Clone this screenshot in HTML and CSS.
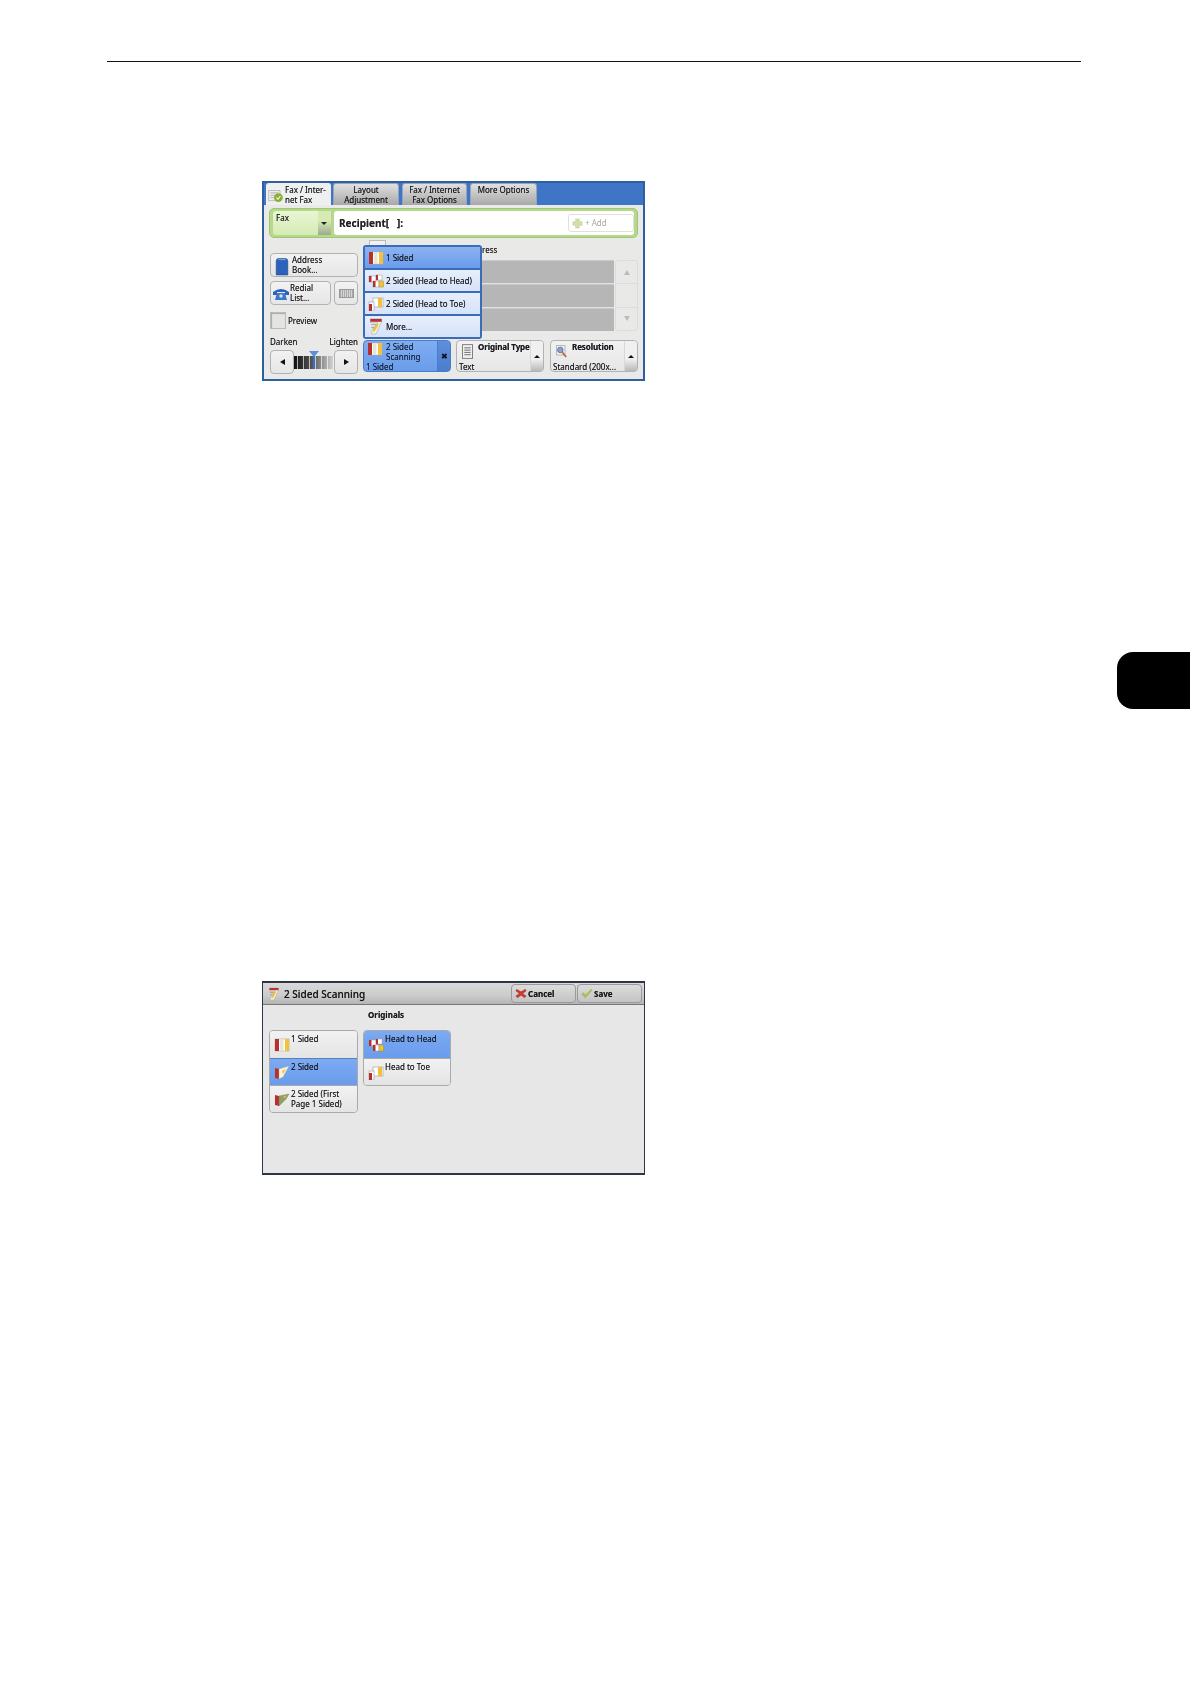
FILE: index.html
```html
<!DOCTYPE html>
<html lang="en">
<head>
<meta charset="utf-8">
<title>2 Sided Scanning</title>
<link rel="stylesheet" href="styles.css">
</head>
<body>
<svg class="sprite" xmlns="http://www.w3.org/2000/svg">
  <symbol id="i-one" viewBox="0 0 16 14">
    <rect x="1" y="1" width="14" height="12" fill="#fff" stroke="#aaa" stroke-width=".6"/>
    <rect x="1" y="1" width="4" height="12" fill="#b8302c"/>
    <rect x="6" y="1" width="3.500" height="12" fill="#e9e4d8"/>
    <rect x="11" y="1" width="4" height="12" fill="#f0c23c"/>
  </symbol>
  <symbol id="i-hh" viewBox="0 0 16 14">
    <rect x="1" y="2" width="7" height="6" fill="#fff" stroke="#999" stroke-width=".5"/>
    <rect x="1" y="2" width="2.500" height="6" fill="#b8302c"/>
    <rect x="8" y="1" width="6" height="5" fill="#fff" stroke="#999" stroke-width=".5"/>
    <rect x="8" y="1" width="2" height="5" fill="#b8302c"/>
    <rect x="5" y="7" width="6" height="6" fill="#fff" stroke="#999" stroke-width=".5"/>
    <rect x="5" y="7" width="2.500" height="6" fill="#b8302c"/>
    <rect x="11" y="7" width="4.500" height="6" fill="#f0c23c" stroke="#a98a2c" stroke-width=".5"/>
  </symbol>
  <symbol id="i-ht" viewBox="0 0 16 14">
    <rect x="5" y="1" width="10" height="9" fill="#fff" stroke="#999" stroke-width=".6"/>
    <rect x="10" y="1" width="4" height="9" fill="#f0c23c"/>
    <rect x="1" y="5" width="5" height="9" fill="#fff" stroke="#999" stroke-width=".6"/>
    <rect x="1" y="7" width="3" height="7" fill="#b8302c"/>
  </symbol>
  <symbol id="i-more" viewBox="0 0 16 18">
    <path d="M2 1h12v3L8 17H3l1-4 6-8H2z" fill="#f4efe2" stroke="#9a9a9a" stroke-width=".5"/>
    <path d="M2 1h12v3H2z" fill="#b8302c"/>
    <path d="M4 12l5-6 2 1-5 8z" fill="#f0c23c"/>
    <path d="M3 7h5M3 10h3" stroke="#777" stroke-width=".6"/>
  </symbol>
  <symbol id="i-fold" viewBox="0 0 16 14">
    <path d="M1 2l4 1v10l-4-1z" fill="#b8302c"/>
    <path d="M5 3l10-3-6 11-4 2z" fill="#fbf3dc" stroke="#aaa" stroke-width=".4"/>
    <path d="M8 5l4-2-3 5z" fill="#f0c23c"/>
  </symbol>
  <symbol id="i-first" viewBox="0 0 16 14">
    <path d="M1 2l4 1v10l-4-1z" fill="#b8302c"/>
    <path d="M5 3l10-2-3 5-7 7z" fill="#8fa060" stroke="#777" stroke-width=".4"/>
    <path d="M9 4l4-2-2 3z" fill="#f0c23c"/>
  </symbol>
  <symbol id="i-doc" viewBox="0 0 12 16">
    <rect x=".5" y=".5" width="11" height="15" fill="#f0f0f0" stroke="#777"/>
    <path d="M2.500 4h7M2.500 6.500h7M2.500 9h7M2.500 11.500h7" stroke="#666"/>
  </symbol>
  <symbol id="i-res" viewBox="0 0 14 16">
    <rect x=".5" y=".5" width="11" height="12" fill="#eee" stroke="#aaa"/>
    <circle cx="5.500" cy="6" r="3.500" fill="#8f9fe0" stroke="#566"/>
    <path d="M8 9l5 6" stroke="#b0642c" stroke-width="2"/>
  </symbol>
  <symbol id="i-book" viewBox="0 0 13 17">
    <path d="M1 3q0-2.500 2-2.500h7q2 0 2 2.500v13H1z" fill="#2c62b8" stroke="#1d4488" stroke-width=".5"/>
    <path d="M3 1.500h7" stroke="#7fa4e0"/>
  </symbol>
  <symbol id="i-phone" viewBox="0 0 16 13">
    <path d="M0 5Q8-1 16 5v3h-4V5H4v3H0z" fill="#2c62b8"/>
    <path d="M2 13l2-7h8l2 7z" fill="#3a78c8"/>
    <circle cx="8" cy="9" r="1.800" fill="#cfe0f8"/>
  </symbol>
  <symbol id="i-check" viewBox="0 0 20 16">
    <rect x="1" y="1" width="14" height="13" fill="#ececec" stroke="#999" stroke-width=".7"/>
    <path d="M3 4h10M3 7h6M3 10h5" stroke="#aaa"/>
    <circle cx="13" cy="10" r="5.500" fill="#8cae32"/>
    <path d="M10.500 10l2 2 3-4" fill="none" stroke="#fff" stroke-width="1.300"/>
  </symbol>
  <symbol id="i-x" viewBox="0 0 14 12">
    <path d="M2 1l5 3 5-3 1 2-4 3 4 3-2 2-4-3-4 3-2-2 4-3-4-3z" fill="#d23a2c" stroke="#8f1f16" stroke-width=".4"/>
  </symbol>
  <symbol id="i-ok" viewBox="0 0 14 12">
    <path d="M1 7l2-2 2 3 7-7 1 1-8 9z" fill="#a8c848" stroke="#7c9a30" stroke-width=".4"/>
  </symbol>
  <symbol id="i-plus" viewBox="0 0 12 12">
    <path d="M4 1h4v3h3v4H8v3H4V8H1V4h3z" fill="#cfe0a8" stroke="#b6c792" stroke-width=".5"/>
  </symbol>
</svg>

<main class="page">
  <div class="rule"></div>

  <section class="panel panel-main">
    <nav class="tabs">
      <div class="tab tab-active"><svg class="ic-check"><use href="#i-check"/></svg><span>Fax / Inter-<br>net Fax</span></div>
      <div class="tab tab-w66">Layout<br>Adjustment</div>
      <div class="tab tab-w65">Fax / Internet<br>Fax Options</div>
      <div class="tab tab-w67 tab-top">More Options</div>
    </nav>
    <div class="body">
      <div class="recipient-bar">
        <div class="fax-type"><span>Fax</span><i class="fax-arrow"></i></div>
        <div class="recipient-field">
          <span class="recipient-label">Recipient[&nbsp;&nbsp;&nbsp;]:</span>
          <span class="add"><svg class="ic-plus"><use href="#i-plus"/></svg>+ Add</span>
        </div>
      </div>
      <div class="main-grid">
        <div class="left-col">
          <div class="btn btn-address"><svg class="ic-book"><use href="#i-book"/></svg><span>Address<br>Book...</span></div>
          <div class="redial-row">
            <div class="btn btn-redial"><svg class="ic-phone"><use href="#i-phone"/></svg><span>Redial<br>List...</span></div>
            <div class="btn btn-keys"><i class="keys"></i></div>
          </div>
          <div class="preview-row"><i class="checkbox"></i><span>Preview</span></div>
          <div class="dark-labels"><span>Darken</span><span>Lighten</span></div>
          <div class="slider">
            <div class="btn slider-btn"><i class="arrow-left"></i></div>
            <div class="slider-track"><i class="slider-mark"></i></div>
            <div class="btn slider-btn"><i class="arrow-right"></i></div>
          </div>
        </div>
        <div class="right-col">
          <div class="list-label"><i class="hidden-box"></i><span>ress</span></div>
          <div class="list-box">
            <div class="list-rows"><div class="list-row"></div><div class="list-row"></div><div class="list-row"></div></div>
            <div class="list-scroll">
              <div class="scroll-cell"><i class="arrow-up-grey"></i></div>
              <div class="scroll-cell"></div>
              <div class="scroll-cell"><i class="arrow-down-grey"></i></div>
            </div>
          </div>
          <div class="features">
            <div class="feature feature-active">
              <div class="feature-main">
                <div class="feature-head"><svg class="ic-16"><use href="#i-one"/></svg><span class="feature-title">2 Sided<br>Scanning</span></div>
                <div class="feature-value">1 Sided</div>
              </div>
              <div class="feature-side side-x">&#10006;</div>
            </div>
            <div class="feature">
              <div class="feature-main">
                <div class="feature-head"><svg class="ic-doc"><use href="#i-doc"/></svg><span class="feature-title bold">Original Type</span></div>
                <div class="feature-value">Text</div>
              </div>
              <div class="feature-side"><i class="arrow-up"></i></div>
            </div>
            <div class="feature feature-last">
              <div class="feature-main">
                <div class="feature-head"><svg class="ic-doc"><use href="#i-res"/></svg><span class="feature-title bold">Resolution</span></div>
                <div class="feature-value">Standard (200x...</div>
              </div>
              <div class="feature-side"><i class="arrow-up"></i></div>
            </div>
          </div>
        </div>
      </div>
      <div class="dropdown">
        <div class="dd-item dd-selected"><svg class="ic-16"><use href="#i-one"/></svg><span>1 Sided</span></div>
        <div class="dd-item"><svg class="ic-16"><use href="#i-hh"/></svg><span>2 Sided (Head to Head)</span></div>
        <div class="dd-item"><svg class="ic-16"><use href="#i-ht"/></svg><span>2 Sided (Head to Toe)</span></div>
        <div class="dd-item"><svg class="ic-16 ic-tall"><use href="#i-more"/></svg><span>More...</span></div>
      </div>
    </div>
  </section>

  <div class="thumb"></div>

  <section class="panel panel-dialog">
    <header class="dialog-head">
      <svg class="ic-title"><use href="#i-more"/></svg>
      <span class="dialog-title">2 Sided Scanning</span>
      <div class="dialog-btn dialog-cancel"><svg class="ic-act"><use href="#i-x"/></svg><span>Cancel</span></div>
      <div class="dialog-btn"><svg class="ic-act"><use href="#i-ok"/></svg><span>Save</span></div>
    </header>
    <div class="dialog-body">
      <div class="originals">Originals</div>
      <div class="option-cols">
        <div class="option-group group-left">
          <div class="option"><svg class="ic-16"><use href="#i-one"/></svg><span>1 Sided</span></div>
          <div class="option option-on"><svg class="ic-16"><use href="#i-fold"/></svg><span>2 Sided</span></div>
          <div class="option"><svg class="ic-16"><use href="#i-first"/></svg><span>2 Sided (First<br>Page 1 Sided)</span></div>
        </div>
        <div class="option-group group-right">
          <div class="option option-on"><svg class="ic-16"><use href="#i-hh"/></svg><span>Head to Head</span></div>
          <div class="option"><svg class="ic-16"><use href="#i-ht"/></svg><span>Head to Toe</span></div>
        </div>
      </div>
    </div>
  </section>
</main>
</body>
</html>
```

FILE: styles.css
```css
* { box-sizing: border-box; }
html, body { margin: 0; padding: 0; background: #fff; }
body { font-family: "Noto Sans", "Liberation Sans", sans-serif; color: #17171c; font-size: 8px; line-height: 10px; }
.sprite { display: none; }
i { display: block; }
.page { width: 1190px; height: 1684px; display: flex; flex-direction: column; overflow: hidden; }
.rule { height: 1px; margin: 61px 109px 0 107px; background: #111; }

.panel { width: 383px; margin-left: 262px; filter: blur(.4px); text-shadow: 0 0 .5px rgba(0,0,0,.55); }

/* main fax panel */
.panel-main { height: 200px; margin-top: 119px; border: 2px solid #2e5f9f; background: #3f75c6; display: flex; flex-direction: column; }
.tabs { display: flex; height: 22px; padding-left: 2px; gap: 2px; }
.tab { width: 66px; height: 22px; padding-top: 1px; text-align: center; border-radius: 3px 3px 0 0; background: linear-gradient(#e0e0e0, #a8a8a8); border: 1px solid #96a4b8; border-bottom: 0; }
.tab-w65 { width: 65px; margin-left: 1px; }
.tab-w67 { width: 67px; margin-left: 1px; }
.tab-active { width: 65px; background: #eef0ef; border-color: #eef0ef; display: flex; text-align: left; gap: 1px; padding-left: 1px; }
.ic-check { width: 16px; height: 14px; margin-top: 4px; flex: none; }
.body { position: relative; flex: 1; background: #e9e9e8; padding: 3px 5px 0; }

.recipient-bar { height: 30px; background: #b6d88c; border: 1px solid #9fc774; border-radius: 5px; padding: 2px 3px; display: flex; gap: 3px; }
.fax-type { width: 58px; background: linear-gradient(#e8f6d4, #d6eab4); border-radius: 3px 0 0 3px; padding: 2px 0 0 3px; display: flex; justify-content: space-between; }
.fax-arrow { width: 13px; height: 24px; margin-top: -2px; background: linear-gradient(#d6eab4 40%, #9caa90); position: relative; }
.fax-arrow::after { content: ""; display: block; width: 0; height: 0; border: 3px solid transparent; border-top: 3px solid #222; border-bottom: 0; margin: 11px 0 0 3px; }
.recipient-field { flex: 1; background: #fff; border-radius: 3px; display: flex; align-items: center; justify-content: space-between; padding: 0 0 0 5px; }
.recipient-label { font-size: 10px; font-weight: 700; color: #222; }
.add { width: 66px; height: 18px; border: 1px solid #e0e0da; border-radius: 3px; color: #a9a99e; text-shadow: none; display: flex; align-items: center; padding-left: 3px; gap: 2px; }
.ic-plus { width: 11px; height: 11px; }

.main-grid { display: grid; grid-template-columns: 88px 275px; column-gap: 5px; padding-left: 1px; }
.left-col { padding-top: 15px; }
.btn { background: linear-gradient(#f2f2f2, #e6e6e6); border: 1px solid #b2b2b2; border-radius: 4px; display: flex; align-items: center; }
.btn-address { height: 24px; gap: 3px; padding-left: 4px; }
.ic-book { width: 14px; height: 18px; margin-top: 3px; }
.redial-row { display: flex; gap: 3px; margin-top: 4px; }
.btn-redial { width: 61px; height: 24px; gap: 1px; padding-left: 2px; }
.ic-phone { width: 16px; height: 13px; }
.btn-keys { width: 24px; height: 24px; justify-content: center; }
.keys { width: 15px; height: 9px; background: repeating-linear-gradient(90deg, #aaa 0 1px, #d5d5d5 1px 2px); border: 1px solid #999; }
.preview-row { display: flex; align-items: center; gap: 2px; margin-top: 7px; padding-left: 0; }
.checkbox { width: 16px; height: 17px; background: #e4e4e4; border: 1px solid #bbb; box-shadow: inset 1px 1px 1px #aaa; }
.dark-labels { display: flex; justify-content: space-between; margin-top: 8px; }
.slider { display: flex; align-items: center; margin-top: 3px; height: 24px; }
.slider-btn { width: 24px; height: 24px; justify-content: center; }
.slider-track { position: relative; width: 40px; height: 13px; background: linear-gradient(90deg, #111 0, #555 45%, #d8d8d8 100%); }
.slider-track::before { content: ""; display: block; height: 100%; background: repeating-linear-gradient(90deg, transparent 0 3px, rgba(255,255,255,.65) 3px 4px, transparent 4px 6px); }
.slider-mark { position: absolute; left: 19px; top: -5px; width: 2px; height: 18px; background: #3a6fc4; }
.slider-mark::before { content: ""; display: block; width: 0; height: 0; margin-left: -4px; border: 5px solid transparent; border-top: 6px solid #5b8ede; border-bottom: 0; }
.arrow-left { width: 0; height: 0; border: 3px solid transparent; border-right: 5px solid #111; border-left: 0; }
.arrow-right { width: 0; height: 0; border: 3px solid transparent; border-left: 5px solid #111; border-right: 0; }
.arrow-up { width: 0; height: 0; border: 3.500px solid transparent; border-bottom: 3.500px solid #111; border-top: 0; }
.arrow-up-grey { width: 0; height: 0; border: 3px solid transparent; border-bottom: 5px solid #bbb; border-top: 0; }
.arrow-down-grey { width: 0; height: 0; border: 3px solid transparent; border-top: 5px solid #bbb; border-bottom: 0; }

.right-col { display: flex; flex-direction: column; }
.list-label { height: 22px; padding-left: 119px; padding-top: 7px; position: relative; }
.hidden-box { position: absolute; left: 6px; top: 2px; width: 17px; height: 8px; background: #f0f0f0; border: 1px solid #bbb; }
.list-box { display: flex; gap: 1px; height: 71px; }
.list-rows { flex: 1; background: #e0e0e0; padding-left: 119px; display: flex; flex-direction: column; gap: 1px; }
.list-row { flex: 1; background: #b6b6b6; box-shadow: inset 0 1px 0 #c9c9c9; }
.list-scroll { width: 23px; border: 1px solid #dcdcdc; border-radius: 3px; display: flex; flex-direction: column; }
.scroll-cell { flex: 1; display: flex; align-items: center; justify-content: center; border-top: 1px solid #dcdcdc; }
.scroll-cell:first-child { border-top: 0; }

.features { display: flex; gap: 5px; margin-top: 9px; }
.feature { width: 88px; height: 32px; display: flex; background: linear-gradient(#f2f2f2, #e6e6e6); border: 1px solid #b2b2b2; border-radius: 4px; overflow: hidden; }
.feature-last { margin-left: 1px; }
.feature-active { width: 88px; background: linear-gradient(#7fadf2, #6a9cea); border-color: #4a7cc8; color: #17233c; }
.feature-main { flex: 1; min-width: 0; padding: 1px 1px 0 2px; display: flex; flex-direction: column; justify-content: space-between; }
.feature-head { display: flex; gap: 3px; padding-left: 1px; }
.feature-value { white-space: nowrap; margin-bottom: -1px; }
.feature-side { width: 13px; flex: none; display: flex; align-items: center; justify-content: center; background: linear-gradient(#f0f0f0 60%, #b8b8b8); border-left: 1px solid #d8d8d8; }
.side-x { background: linear-gradient(#5d8fdc, #4a7dcc); border-left-color: #4a7cc8; font-size: 8px; color: #112; }
.bold { font-weight: 700; white-space: nowrap; margin-left: 2px; letter-spacing: -.1px; }
.ic-16 { width: 16px; height: 14px; flex: none; }
.ic-tall { height: 17px; }
.ic-doc { width: 11px; height: 15px; margin: 2px 0 0 2px; flex: none; }

/* dropdown over the panel */
.dropdown { position: absolute; left: 99px; top: 40px; width: 119px; height: 94px; background: #3a6cb8; border: 2px solid #3a6cb8; border-radius: 3px; display: flex; flex-direction: column; gap: 2px; }
.dd-item { flex: 1; display: flex; align-items: center; gap: 2px; padding-left: 3px; background: linear-gradient(#e6eefc, #d6e3f8); white-space: nowrap; }
.dd-selected { background: linear-gradient(#8cb3f0, #6a9cec); }

.thumb { width: 73px; height: 57px; margin: 271px 0 0 auto; background: #000; border-radius: 16px 0 0 16px; }

/* dialog panel */
.panel-dialog { height: 194px; margin-top: 272px; border: 1px solid #2c3644; border-top-width: 2px; border-bottom-width: 2px; background: #e7e7e7; display: flex; flex-direction: column; }
.dialog-head { height: 22px; display: flex; align-items: center; background: linear-gradient(#d9d9d9, #ccc 60%, #b4b4b4); border-bottom: 1px solid #777; padding: 0 2px 0 5px; }
.ic-title { width: 12px; height: 16px; flex: none; }
.dialog-title { flex: 1; font-size: 10px; font-weight: 500; margin-left: 4px; }
.dialog-btn { width: 65px; height: 19px; border: 1px solid #9a9a9a; border-radius: 4px; background: linear-gradient(#dcdcdc, #c4c4c4); display: flex; align-items: center; gap: 1px; padding-left: 3px; font-weight: 700; }
.dialog-cancel { width: 65px; margin-right: 1px; }
.ic-act { width: 12px; height: 11px; }
.dialog-body { padding: 5px 0 0 6px; flex: 1; }
.originals { padding-left: 99px; height: 20px; font-weight: 700; }
.option-cols { display: flex; gap: 5px; align-items: flex-start; }
.option-group { border: 1px solid #aaa; border-radius: 4px; overflow: hidden; }
.group-left { width: 89px; }
.group-right { width: 88px; }
.option { height: 27px; display: flex; align-items: flex-start; gap: 1px; padding: 3px 0 0 4px; background: linear-gradient(#f2f2f2, #e4e4e4); border-top: 1px solid #aaa; }
.option:first-child { border-top: 0; }
.option .ic-16 { margin-top: 4px; }
.option-on { background: linear-gradient(#7caaf2, #6a9cec); border-top-color: #5b7fb8; }
```
